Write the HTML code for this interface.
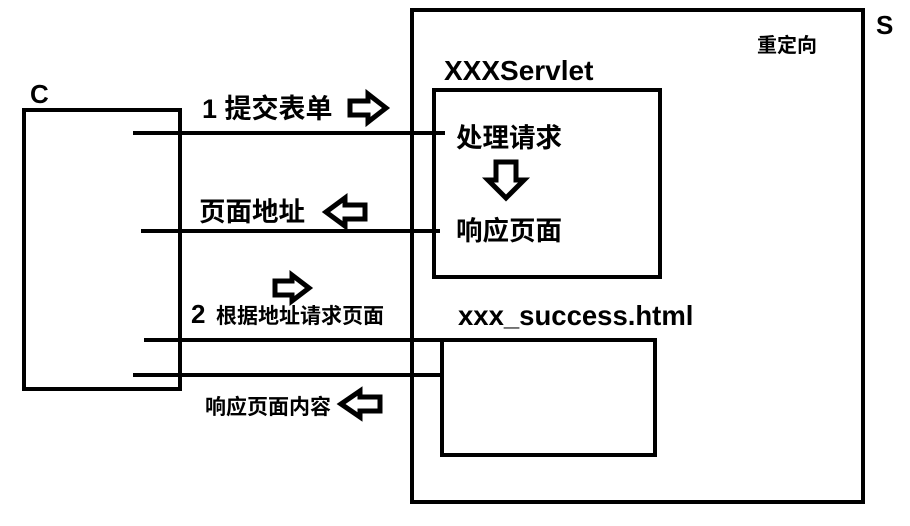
<!DOCTYPE html>
<html><head><meta charset="utf-8"><style>
html,body{margin:0;padding:0;background:#fff;}
svg{display:block}
text{font-family:"Liberation Sans","Noto Sans CJK SC",sans-serif;font-weight:bold;fill:#000}
</style></head><body>
<svg width="910" height="526" viewBox="0 0 910 526" xmlns="http://www.w3.org/2000/svg">
<g fill="none" stroke="#000" stroke-width="4">
<rect x="24" y="110" width="156" height="279"/>
<rect x="412" y="10" width="451" height="492"/>
<rect x="434" y="90" width="226" height="187"/>
<rect x="442" y="340" width="213" height="115"/>
<line x1="133" y1="133" x2="445" y2="133"/>
<line x1="141" y1="231" x2="440" y2="231"/>
<line x1="144" y1="340" x2="442" y2="340"/>
<line x1="133" y1="375" x2="442" y2="375"/>
</g>
<g fill="#fff" stroke="#000" stroke-width="5" stroke-linejoin="miter">
<polygon points="350,101 368,101 368,94 386,108 368,122 368,115 350,115"/>
<polygon points="365,205 345,205 345,198 326,212 345,226 345,219 365,219"/>
<polygon points="496,162 516,162 516,180 524,180 506,198 488,180 496,180"/>
<polygon points="275,281 292,281 292,275 309,288 292,301 292,295 275,295"/>
<polygon points="380,397 360,397 360,391 341,404 360,417 360,411 380,411"/>
</g>
<text x="30" y="103" font-size="26">C</text>
<text x="876" y="34" font-size="26">S</text>
<text x="757" y="52" font-size="20">重定向</text>
<text x="444" y="80" font-size="28">XXXServlet</text>
<text x="202" y="118" font-size="27">1 提交表单</text>
<text x="456" y="147" font-size="26.5">处理请求</text>
<text x="199" y="221" font-size="26.5">页面地址</text>
<text x="456" y="240" font-size="26.5">响应页面</text>
<text x="191" y="323" font-size="26">2</text>
<text x="216" y="323" font-size="21">根据地址请求页面</text>
<text x="458" y="325" font-size="27.5">xxx_success.html</text>
<text x="205" y="414" font-size="21">响应页面内容</text>
</svg>
</body></html>
